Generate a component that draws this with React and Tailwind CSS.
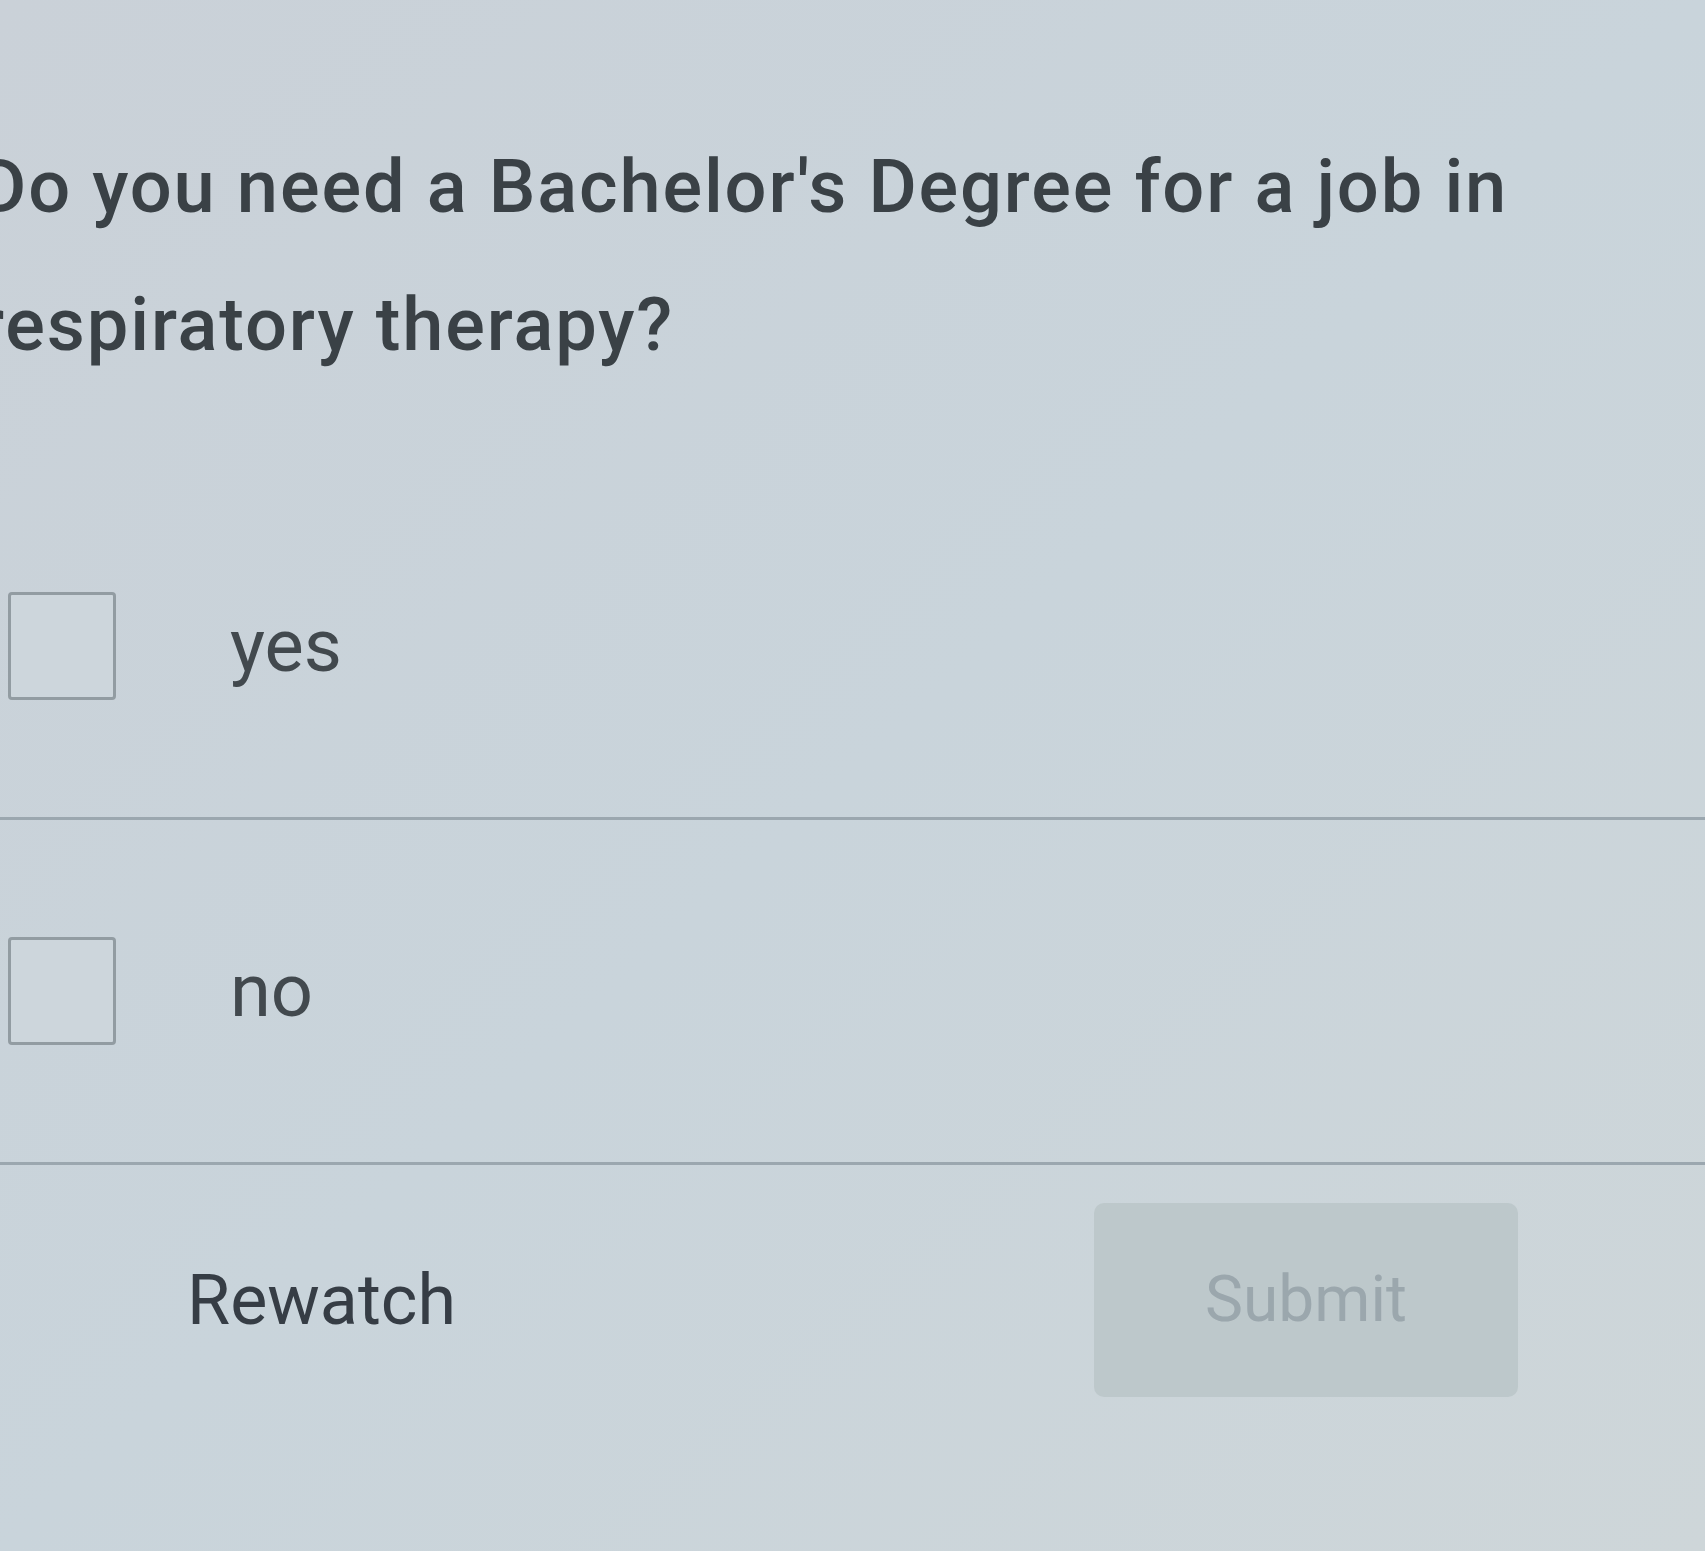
import { useState } from 'react';

const options = [
  { id: 'yes', label: 'yes' },
  { id: 'no', label: 'no' },
];

const sans = { fontFamily: 'Roboto, "Liberation Sans", Arial, sans-serif' };

export default function App() {
  const [picked, setPicked] = useState(null);

  return (
    <div
      className="min-h-screen w-full overflow-hidden bg-gradient-to-br from-[#cad1d8] via-[#c9d4db] to-[#ced6d9]"
      style={sans}
    >
      <div className="pt-[118px]">
        <h1 className="-ml-[22px] w-[1580px] text-[74px] leading-[138px] font-medium tracking-[0.025em] text-[#3a4146]">
          Do you need a Bachelor's Degree for a job in respiratory therapy?
        </h1>

        {/* answer rows */}
        <div className="mt-[81px]">
          {options.map((opt) => (
            <label
              key={opt.id}
              className="flex h-[345px] cursor-pointer items-center border-b-[3px] border-[#9ba7af] pl-[8px]"
            >
              <input
                type="checkbox"
                checked={picked === opt.id}
                onChange={() => setPicked(picked === opt.id ? null : opt.id)}
                className="sr-only"
              />
              <span className="h-[108px] w-[108px] shrink-0 rounded-[4px] border-[3px] border-[#929ca2] bg-[#cdd6dc]" />
              <span className="ml-[114px] text-[74px] leading-none text-[#42494e]">{opt.label}</span>
            </label>
          ))}
        </div>

        <div className="flex items-center justify-between px-[187px] pt-[38px]">
          <button className="text-[70px] leading-none text-[#363d45]">Rewatch</button>
          <button
            disabled
            className="flex h-[194px] w-[424px] items-center justify-center rounded-[10px] bg-[#bdc8cb] text-[64px] text-[#9ba7ad]"
          >
            Submit
          </button>
        </div>
      </div>
    </div>
  );
}
